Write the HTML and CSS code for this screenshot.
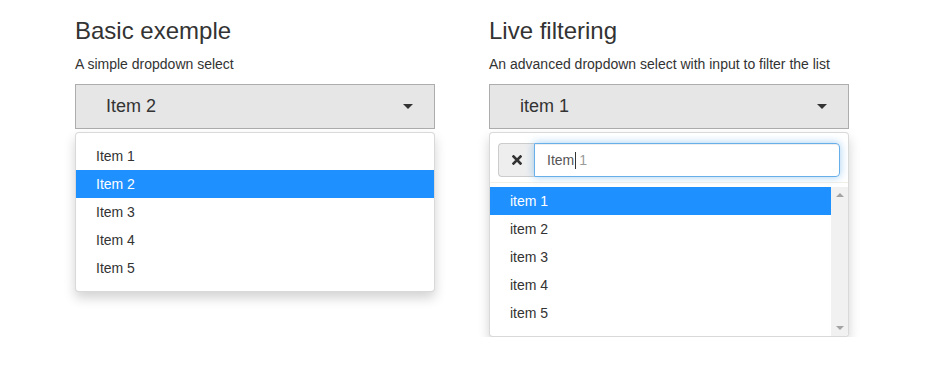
FILE: index.html
```
<!DOCTYPE html>
<html lang="en">
<head>
    <meta charset="UTF-8">
    <meta name="viewport" content="width=device-width, initial-scale=1.0">
    <title>Dropdown select</title>
    <link rel="stylesheet" href="styles.css">
</head>
<body>
    <div class="page">
        <div class="col">
            <h3>Basic exemple</h3>
            <p class="desc">A simple dropdown select</p>
            <div class="select">
                <button class="select-btn" type="button">
                    <span class="value">Item 2</span>
                    <span class="caret"></span>
                </button>
                <ul class="menu">
                    <li>Item 1</li>
                    <li class="active">Item 2</li>
                    <li>Item 3</li>
                    <li>Item 4</li>
                    <li>Item 5</li>
                </ul>
            </div>
        </div>
        <div class="col">
            <h3>Live filtering</h3>
            <p class="desc">An advanced dropdown select with input to filter the list</p>
            <div class="select">
                <button class="select-btn" type="button">
                    <span class="value">item 1</span>
                    <span class="caret"></span>
                </button>
                <div class="menu filter-menu">
                    <div class="search">
                        <div class="input-group">
                            <span class="addon">
                                <svg width="10" height="10" viewBox="0 0 10 10">
                                    <path d="M1.5 1.5 L8.5 8.5 M8.5 1.5 L1.5 8.5" stroke="#333" stroke-width="2.6" stroke-linecap="square"/>
                                </svg>
                            </span>
                            <div class="search-input">Item<span class="cursor"></span><span class="hint">1</span></div>
                        </div>
                    </div>
                    <div class="scroll">
                        <ul class="list">
                            <li class="active">item 1</li>
                            <li>item 2</li>
                            <li>item 3</li>
                            <li>item 4</li>
                            <li>item 5</li>
                        </ul>
                        <div class="scrollbar">
                            <span class="arrow up"></span>
                            <span class="arrow down"></span>
                        </div>
                    </div>
                </div>
            </div>
        </div>
    </div>
</body>
</html>
```

FILE: styles.css
```
* {
    box-sizing: border-box;
}
html, body {
    margin: 0;
    background-color: #fff;
    font-family: "Liberation Sans", Arial, Helvetica, sans-serif;
    font-size: 14px;
    color: #333;
}
.page {
    display: flex;
    gap: 54px;
    padding: 18px 75px 0;
}
.col {
    width: 360px;
}
h3 {
    margin: 0 0 10px;
    font-size: 24px;
    font-weight: normal;
    line-height: 1.1;
}
.desc {
    margin: 0 0 10px;
    font-size: 14px;
    line-height: 20px;
}

/* Toggle button */
.select-btn {
    display: flex;
    align-items: center;
    justify-content: space-between;
    width: 100%;
    height: 45px;
    padding: 0 21px 0 30px;
    background-color: #e6e6e6;
    border: 1px solid #adadad;
    border-radius: 0;
    font-family: inherit;
    font-size: 18px;
    color: #333;
}
.caret {
    width: 0;
    height: 0;
    border-top: 5px solid #333;
    border-left: 5px solid transparent;
    border-right: 5px solid transparent;
}

/* Dropdown menu */
.menu {
    margin: 3px 0 0;
    padding: 9px 0;
    list-style: none;
    background-color: #fff;
    border: 1px solid rgba(0, 0, 0, .15);
    border-radius: 4px;
    box-shadow: 0 6px 12px rgba(0, 0, 0, .175);
}
.menu li, .list li {
    height: 28px;
    line-height: 28px;
    padding: 0 20px;
    font-size: 14px;
    color: #333;
}
.menu li.active, .list li.active {
    background-color: #1e90ff;
    color: #fff;
}

/* Live filter */
.filter-menu {
    padding: 0;
}
.search {
    padding: 10px 8px 5px;
    border-bottom: 1px solid #f3efe8;
}
.input-group {
    display: flex;
    height: 34px;
}
.addon {
    display: flex;
    align-items: center;
    justify-content: center;
    width: 36px;
    background-color: #eee;
    border: 1px solid #ccc;
    border-right: 0;
    border-radius: 4px 0 0 4px;
}
.search-input {
    flex: 1;
    display: flex;
    align-items: center;
    padding: 0 12px;
    border: 1px solid #66afe9;
    border-radius: 0 4px 4px 0;
    box-shadow: inset 0 1px 1px rgba(0, 0, 0, .075), 0 0 8px rgba(102, 175, 233, .6);
    font-size: 14px;
    color: #555;
}
.cursor {
    width: 1px;
    height: 17px;
    margin: 0 3px 0 1px;
    background-color: #333;
}
.hint {
    color: #999;
}
.scroll {
    display: flex;
    height: 149px;
    margin-top: 4px;
    overflow: hidden;
    border-radius: 0 0 4px 4px;
}
.list {
    flex: 1;
    margin: 0;
    padding: 0;
    list-style: none;
}
.scrollbar {
    display: flex;
    flex-direction: column;
    justify-content: space-between;
    align-items: center;
    width: 17px;
    padding: 6px 0;
    background-color: #f1f1f1;
}
.arrow {
    width: 0;
    height: 0;
    border-left: 4px solid transparent;
    border-right: 4px solid transparent;
}
.arrow.up {
    border-bottom: 4px solid #a3a3a3;
}
.arrow.down {
    border-top: 4px solid #a3a3a3;
}
```
